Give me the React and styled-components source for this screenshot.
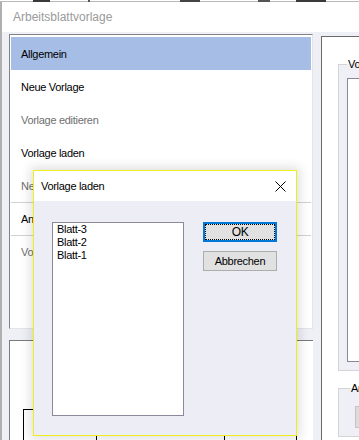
import React from 'react';
import styled, { createGlobalStyle } from 'styled-components';

const GlobalStyle = createGlobalStyle`
  html, body {
    margin: 0;
    padding: 0;
    background: #fff;
  }
  body {
    width: 359px;
    height: 440px;
    overflow: hidden;
    font-family: "Liberation Sans", Arial, sans-serif;
    font-size: 11px;
    letter-spacing: -0.3px;
    color: #000;
  }
`;

const categories = [
  { label: 'Allgemein', selected: true },
  { label: 'Neue Vorlage' },
  { label: 'Vorlage editieren', disabled: true },
  { label: 'Vorlage laden' },
  { label: 'Neues Blatt', disabled: true },
  { label: 'Ansicht', separator: true },
  { label: 'Vorgaben', disabled: true, separator: true },
];

const sheets = ['Blatt-3', 'Blatt-2', 'Blatt-1'];

const App = () => {
  return (
    <Screen>
      <GlobalStyle />
      <Backdrop width="359" height="2" viewBox="0 0 359 2">
        <rect x="0" y="1" width="359" height="1" fill="#b9b9b9" />
        <rect x="33" y="0" width="17" height="2" fill="#3a3a3a" />
        <rect x="88" y="0" width="2" height="2" fill="#555" />
        <rect x="180" y="0" width="20" height="2" fill="#444" />
        <rect x="258" y="0" width="12" height="2" fill="#555" />
        <rect x="296" y="0" width="30" height="2" fill="#3a3a3a" />
      </Backdrop>
      <Window>
        <TitleBar>Arbeitsblattvorlage</TitleBar>
        <Body>
          <LeftColumn>
            <ListBox>
              {categories.map((c) => (
                <Item
                  key={c.label}
                  $selected={c.selected}
                  $disabled={c.disabled}
                  $separator={c.separator}
                >
                  {c.label}
                </Item>
              ))}
            </ListBox>
            <PreviewPanel>
              <Table>
                <Cell $width="72px" />
                <Cell $width="127px" />
                <Cell />
              </Table>
            </PreviewPanel>
          </LeftColumn>
          <RightPanel>
            <GroupBox>
              <Legend>Vorschau</Legend>
              <PreviewBox />
            </GroupBox>
            <GroupBox $second>
              <Legend $offset="3px">Anzeige</Legend>
              <SmallButton />
            </GroupBox>
          </RightPanel>
        </Body>
      </Window>

      <Dialog>
        <DialogTitle>
          <span>Vorlage laden</span>
          <CloseIcon width="11" height="11" viewBox="0 0 11 11">
            <path d="M0.5 0.5 L10.5 10.5 M10.5 0.5 L0.5 10.5" stroke="#000" strokeWidth="1" fill="none" />
          </CloseIcon>
        </DialogTitle>
        <DialogBody>
          <SheetList>
            {sheets.map((s) => (
              <SheetItem key={s}>{s}</SheetItem>
            ))}
          </SheetList>
          <ButtonColumn>
            <Button $default>OK</Button>
            <Button>Abbrechen</Button>
          </ButtonColumn>
        </DialogBody>
      </Dialog>
    </Screen>
  );
};

export default App;

const Screen = styled.div`
  position: relative;
  width: 359px;
  height: 440px;
  overflow: hidden;
  background: #fff;
`;

const Backdrop = styled.svg`
  display: block;
`;

const Window = styled.div`
  border-left: 2px solid #b0b0b0;
  height: 438px;
  display: flex;
  flex-direction: column;
  background: #fff;
`;

const TitleBar = styled.div`
  height: 30px;
  flex: none;
  display: flex;
  align-items: center;
  padding-left: 11px;
  font-size: 12px;
  letter-spacing: 0;
  color: #9a9a9a;
`;

const Body = styled.div`
  flex: 1;
  min-height: 0;
  overflow: hidden;
  background: #efeff6;
  display: grid;
  grid-template-columns: 304px 200px;
  column-gap: 8px;
  align-items: start;
  padding: 2px 0 0 7px;
`;

const LeftColumn = styled.div`
  display: flex;
  flex-direction: column;
  gap: 11px;
`;

const ListBox = styled.div`
  box-sizing: border-box;
  height: 295px;
  background: #fff;
  border: 1px solid;
  border-color: #828282 #e4e4e8 #e4e4e8 #828282;
  padding: 2px 1px 1px 1px;
`;

const Item = styled.div`
  box-sizing: border-box;
  height: 33px;
  padding: 2px 0 0 10px;
  line-height: 31px;
  white-space: nowrap;
  color: ${(p) => (p.$disabled ? '#6f6f6f' : '#000')};
  background: ${(p) => (p.$selected ? '#a6bde5' : 'transparent')};
  box-shadow: ${(p) => (p.$separator ? 'inset 0 1px 0 #d2d2d2' : 'none')};
`;

const PreviewPanel = styled.div`
  box-sizing: border-box;
  height: 130px;
  background: #fff;
  border-top: 1px solid #7a7a7a;
  border-left: 1px solid #7a7a7a;
  padding: 68px 0 0 13px;
`;

const Table = styled.div`
  width: 274px;
  height: 60px;
  box-sizing: border-box;
  border: 1px solid #000;
  display: flex;
`;

const Cell = styled.div`
  width: ${(p) => p.$width || 'auto'};
  flex: ${(p) => (p.$width ? 'none' : '1')};
  border-right: ${(p) => (p.$width ? '1px solid #000' : 'none')};
`;

const RightPanel = styled.div`
  box-sizing: border-box;
  margin-top: 2px;
  height: 420px;
  background: #fff;
  border-top: 1px solid #6b6b6b;
  border-left: 1px solid #6b6b6b;
  padding: 21px 0 0 16px;
`;

const GroupBox = styled.fieldset`
  margin: ${(p) => (p.$second ? '11px 0 0 0' : '0')};
  padding: ${(p) => (p.$second ? '11px 0 8px 8px' : '7px 0 8px 8px')};
  border: 1px solid #d3d3da;
  background: #efeff6;
  width: 160px;
  min-width: 0;
`;

const Legend = styled.legend`
  padding: 0 1px;
  margin-left: ${(p) => p.$offset || '0'};
  line-height: 13px;
  font-size: 11px;
  white-space: nowrap;
`;

const PreviewBox = styled.div`
  box-sizing: border-box;
  width: 150px;
  height: 284px;
  background: #fff;
  border: 1px solid #8a8798;
`;

const SmallButton = styled.div`
  box-sizing: border-box;
  margin-left: 8px;
  width: 60px;
  height: 22px;
  background: #dcdcdc;
  border: 1px solid #c4c4c4;
`;

const Dialog = styled.div`
  position: absolute;
  left: 33px;
  top: 170px;
  width: 264px;
  height: 266px;
  box-sizing: border-box;
  border: 1px solid #eeee1e;
  display: flex;
  flex-direction: column;
  box-shadow: 0 0 10px 3px rgba(0, 0, 0, 0.12);
`;

const DialogTitle = styled.div`
  height: 30px;
  flex: none;
  background: #fff;
  display: flex;
  align-items: center;
  justify-content: space-between;
  padding: 0 10px 0 7px;
`;

const CloseIcon = styled.svg`
  display: block;
`;

const DialogBody = styled.div`
  flex: 1;
  background: #ededf6;
  display: flex;
  align-items: flex-start;
  gap: 19px;
  padding: 21px 0 0 18px;
`;

const SheetList = styled.div`
  box-sizing: border-box;
  width: 132px;
  height: 194px;
  background: #fff;
  border: 1px solid #8c889a;
  padding: 0 0 0 4px;
`;

const SheetItem = styled.div`
  line-height: 13px;
  height: 13px;
`;

const ButtonColumn = styled.div`
  display: flex;
  flex-direction: column;
  gap: 9px;
`;

const Button = styled.div`
  box-sizing: border-box;
  width: 74px;
  height: 20px;
  display: flex;
  align-items: center;
  justify-content: center;
  background: #e1e1e1;
  border: ${(p) => (p.$default ? '2px solid #0078d7' : '1px solid #adadad')};
  outline: ${(p) => (p.$default ? '1px dotted #000' : 'none')};
  outline-offset: -3px;
  font-size: ${(p) => (p.$default ? '12px' : '11px')};
`;
